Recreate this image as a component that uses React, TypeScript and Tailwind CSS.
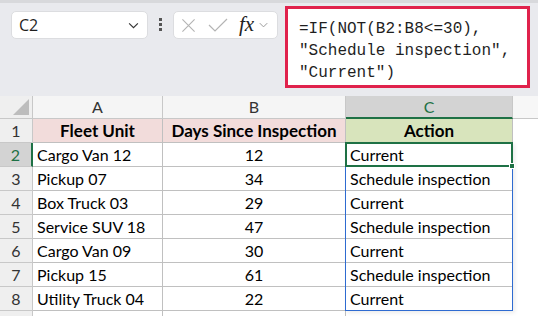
const rows = [
  ["Cargo Van 12", "12", "Current"],
  ["Pickup 07", "34", "Schedule inspection"],
  ["Box Truck 03", "29", "Current"],
  ["Service SUV 18", "47", "Schedule inspection"],
  ["Cargo Van 09", "30", "Current"],
  ["Pickup 15", "61", "Schedule inspection"],
  ["Utility Truck 04", "22", "Current"],
];

const Chevron = ({ className }: { className?: string }) => (
  <svg viewBox="0 0 12 8" className={className} fill="none" stroke="currentColor" strokeWidth="1.3">
    <path d="M1 1.5 L6 6.5 L11 1.5" />
  </svg>
);

const App = () => {
  return (
    <div className="w-[538px] h-[316px] overflow-hidden flex flex-col bg-white font-['Lato',sans-serif] select-none">
      {/* Formula bar */}
      <div className="h-[96px] shrink-0 bg-[#e9eaee] flex flex-col">
        <div className="h-[3px] bg-[#d8d9dc]" />
        <div className="flex items-start">
          <div className="ml-[11px] mt-[8px] w-[137px] h-[28px] rounded-[5px] bg-white border border-[#dcdde0] flex items-center justify-between pl-[7px] pr-[8px]">
            <span className="text-[16px] text-[#1f1f1f] font-['Open_Sans',sans-serif]">C2</span>
            <Chevron className="w-[11px] h-[7px] text-[#333]" />
          </div>
          <div className="ml-[11px] mt-[15px] flex flex-col gap-[2px]">
            <span className="w-[3px] h-[3px] bg-[#555]" />
            <span className="w-[3px] h-[3px] bg-[#555]" />
            <span className="w-[3px] h-[3px] bg-[#555]" />
          </div>
          <div className="ml-[11px] mt-[8px] w-[105px] h-[28px] rounded-[5px] bg-white border border-[#dcdde0] flex items-center pl-[7px]">
            <svg viewBox="0 0 16 16" className="w-[15px] h-[15px]" fill="none" stroke="#b4b4b4" strokeWidth="1.2">
              <path d="M1.5 1.5 L14.5 14.5 M14.5 1.5 L1.5 14.5" />
            </svg>
            <svg viewBox="0 0 20 14" className="ml-[12px] w-[20px] h-[14px]" fill="none" stroke="#b4b4b4" strokeWidth="1.2">
              <path d="M1 7 L7 13 L19 1" />
            </svg>
            <span className="ml-[11px] text-[21px] italic text-[#222] font-['Liberation_Serif',serif] leading-none -mt-[2px]">
              fx
            </span>
            <Chevron className="ml-[4px] w-[11px] h-[6px] text-[#999]" />
          </div>
          <div className="ml-[7px] mt-[3px] w-[245px] h-[82px] border-[3px] border-[#e0224c] bg-white pl-[11px] pt-[9px]">
            <div className="font-['Liberation_Mono',monospace] text-[16px] leading-[22px] text-[#1f1f1f] whitespace-pre">
              {'=IF(NOT(B2:B8<=30),\n"Schedule inspection",\n"Current")'}
            </div>
          </div>
        </div>
      </div>

      {/* Grid */}
      <div className="relative flex-1 grid grid-cols-[33px_130px_183px_167px_1fr] grid-rows-[23px_repeat(8,24px)_1fr] text-[16px] text-black">
        {/* column headers */}
        <div className="bg-[#efefef] border-r border-b border-[#c8c8c8] flex items-end justify-end pr-[3px] pb-[3px]">
          <svg viewBox="0 0 16 16" className="w-[16px] h-[16px]">
            <polygon points="16,0 16,16 0,16" fill="#bdbdbd" />
          </svg>
        </div>
        <div className="bg-[#f5f5f5] border-r border-b border-[#c8c8c8] flex items-center justify-center text-[#333]">A</div>
        <div className="bg-[#f5f5f5] border-r border-b border-[#c8c8c8] flex items-center justify-center text-[#333]">B</div>
        <div className="bg-[#d3d3d3] border-r border-b-2 border-r-[#c8c8c8] border-b-[#1e7145] flex items-center justify-center text-[#1e7145]">C</div>
        <div className="bg-[#f7f7f7] border-b border-[#c8c8c8]" />

        {/* row 1 */}
        <div className="bg-[#efefef] border-r border-b border-[#c8c8c8] flex items-center justify-center text-[#333]">1</div>
        <div className="bg-[#f2dcdb] border-r border-b border-[#c0c0c0] flex items-center justify-center font-bold text-[17px]">Fleet Unit</div>
        <div className="bg-[#f2dcdb] border-r border-b border-[#c0c0c0] flex items-center justify-center font-bold text-[17px]">Days Since Inspection</div>
        <div className="bg-[#d8e4bc] border-r border-b border-[#c0c0c0] flex items-center justify-center font-bold text-[17px]">Action</div>
        <div />

        {rows.map((r, i) => (
          <div key={i} className="contents">
            <div
              className={
                i === 0
                  ? "bg-[#d3d3d3] border-r-2 border-b border-r-[#1e7145] border-b-[#c8c8c8] flex items-center justify-center text-[#1e7145]"
                  : "bg-[#efefef] border-r border-b border-[#c8c8c8] flex items-center justify-center text-[#333]"
              }
            >
              {i + 2}
            </div>
            <div className="border-r border-b border-[#c0c0c0] flex items-center pl-[4px]">{r[0]}</div>
            <div className="border-r border-b border-[#c0c0c0] flex items-center justify-center">{r[1]}</div>
            <div className="border-r border-b border-[#c0c0c0] flex items-center pl-[4px]">{r[2]}</div>
            <div />
          </div>
        ))}

        {/* below row 8 */}
        <div className="bg-[#efefef] border-r border-[#c8c8c8]" />
        <div className="border-r border-[#c0c0c0]" />
        <div className="border-r border-[#c0c0c0]" />
        <div />
        <div />

        {/* selection: range C2:C8 and active cell C2 */}
        <div className="absolute left-[345px] top-[46px] w-[168px] h-[169px] border border-[#2e6bd1] shadow-[2px_2px_4px_rgba(0,0,0,0.08)] pointer-events-none" />
        <div className="absolute left-[345px] top-[46px] w-[168px] h-[25px] border-2 border-[#1e7145] pointer-events-none" />
        <div className="absolute left-[509px] top-[67px] w-[6px] h-[6px] bg-[#1e7145] border border-white pointer-events-none" />
      </div>
    </div>
  );
};

export default App;
